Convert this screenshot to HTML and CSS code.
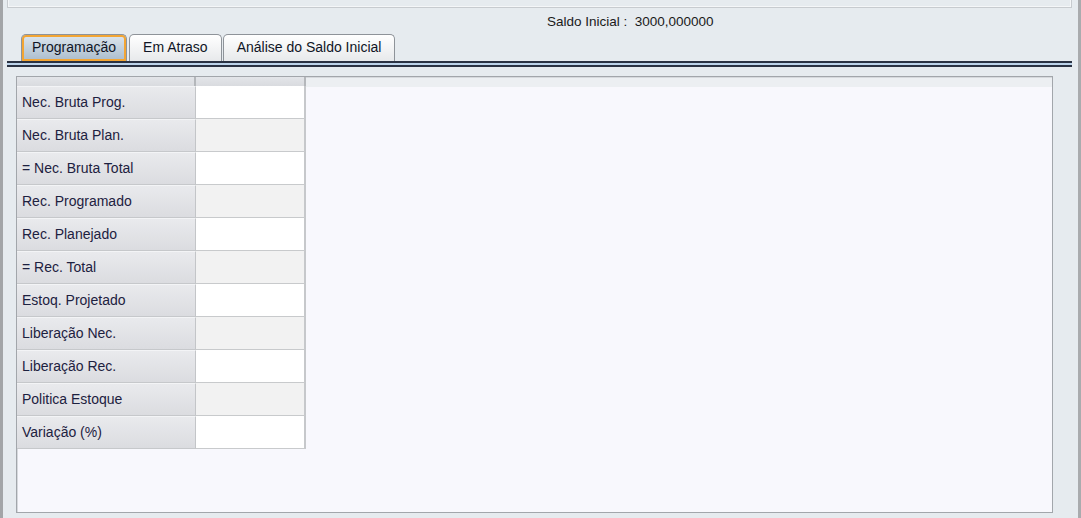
FILE: index.html
```html
<!DOCTYPE html>
<html lang="pt">
<head>
<meta charset="utf-8">
<title>Programação</title>
<link rel="stylesheet" href="styles.css">
</head>
<body>
<div class="window">
  <div class="toppanel"></div>
  <div class="saldo"><span>Saldo Inicial :&nbsp; 3000,000000</span></div>
  <div class="tabbar">
    <div class="tab active">Programação</div>
    <div class="tab">Em Atraso</div>
    <div class="tab">Análise do Saldo Inicial</div>
  </div>
  <div class="tabline"></div>
  <div class="gridbox">
    <div class="table">
      <div class="hcell"></div><div class="hcell"></div>
      <div class="rh">Nec. Bruta Prog.</div><div class="vc odd"></div>
      <div class="rh">Nec. Bruta Plan.</div><div class="vc even"></div>
      <div class="rh">= Nec. Bruta Total</div><div class="vc odd"></div>
      <div class="rh">Rec. Programado</div><div class="vc even"></div>
      <div class="rh">Rec. Planejado</div><div class="vc odd"></div>
      <div class="rh">= Rec. Total</div><div class="vc even"></div>
      <div class="rh">Estoq. Projetado</div><div class="vc odd"></div>
      <div class="rh">Liberação Nec.</div><div class="vc even"></div>
      <div class="rh">Liberação Rec.</div><div class="vc odd"></div>
      <div class="rh">Politica Estoque</div><div class="vc even"></div>
      <div class="rh">Variação (%)</div><div class="vc odd"></div>
    </div>
  </div>
</div>
</body>
</html>
```

FILE: styles.css
```css
* { box-sizing: border-box; }
html, body { margin: 0; padding: 0; }
body {
  background: #e6ebef;
  font-family: "Liberation Sans", Arial, sans-serif;
  color: #1c2035;
}
.window {
  width: 1081px;
  height: 518px;
  border-left: 3px solid #a3a5a8;
  border-right: 3px solid #a9abae;
  overflow: hidden;
}
.toppanel {
  height: 8px;
  margin: 0 6px 0 4px;
  border: 1px solid #c7cbcf;
  border-top: none;
  box-shadow: inset -1px -1px 0 #f4f6f8, inset 1px 0 0 #f4f6f8;
  background: #e6ebef;
}
.saldo {
  height: 26px;
  padding-left: 544px;
  font-size: 13.5px;
  line-height: 27px;
  color: #1a1a1a;
}
.tabbar {
  display: flex;
  height: 27px;
  margin-left: 4px;
  margin-right: 6px;
  padding-left: 14px;
  align-items: flex-end;
}
.tab {
  height: 27px;
  margin-right: 1px;
  padding: 0 13px;
  border: 1px solid #8e9399;
  border-bottom: none;
  border-radius: 5px 5px 0 0;
  background: linear-gradient(#ffffff, #e7e9eb);
  font-size: 14px;
  line-height: 25px;
  color: #101525;
}
.tab.active {
  padding: 0 10px;
  margin-right: 2px;
  border: 1px solid #8e9399;
  border-bottom: none;
  box-shadow: inset 0 0 0 2px #f3a533;
  background: linear-gradient(#dde6ee, #aabccc);
}
.tabline {
  height: 6px;
  margin-left: 4px;
  margin-right: 6px;
  border-top: 2px solid #2a3243;
  border-bottom: 2px solid #2a3243;
  background: #bcd3ea;
}
.gridbox {
  margin: 9px 25px 0 13px;
  height: 437px;
  border: 1px solid #a2a6ab;
  box-shadow: inset 1px 1px 0 #d6d9dd;
  background: linear-gradient(#eceff2 0, #eceff2 10px, #f8f8fd 10px);
}
.table {
  display: grid;
  grid-template-columns: 179px 110px;
  grid-auto-rows: 33px;
  grid-template-rows: 9px;
}
.hcell {
  height: 9px;
  border-right: 2px solid #b4b7bb;
  background: linear-gradient(#e3e5e9, #d9dbdf);
}
.rh {
  border-right: 1px solid #c3c5c8;
  border-bottom: 1px solid #c6c8cb;
  border-top: 1px solid #f3f4f6;
  background: linear-gradient(#e9eaed, #dbdce0);
  font-size: 14px;
  line-height: 30px;
  padding-left: 5px;
  color: #1d2140;
  white-space: nowrap;
}
.vc {
  border-right: 2px solid #c6c8cb;
  border-bottom: 1px solid #c8cacc;
}
.vc.odd { background: #ffffff; }
.vc.even { background: #f2f2f2; }
```
